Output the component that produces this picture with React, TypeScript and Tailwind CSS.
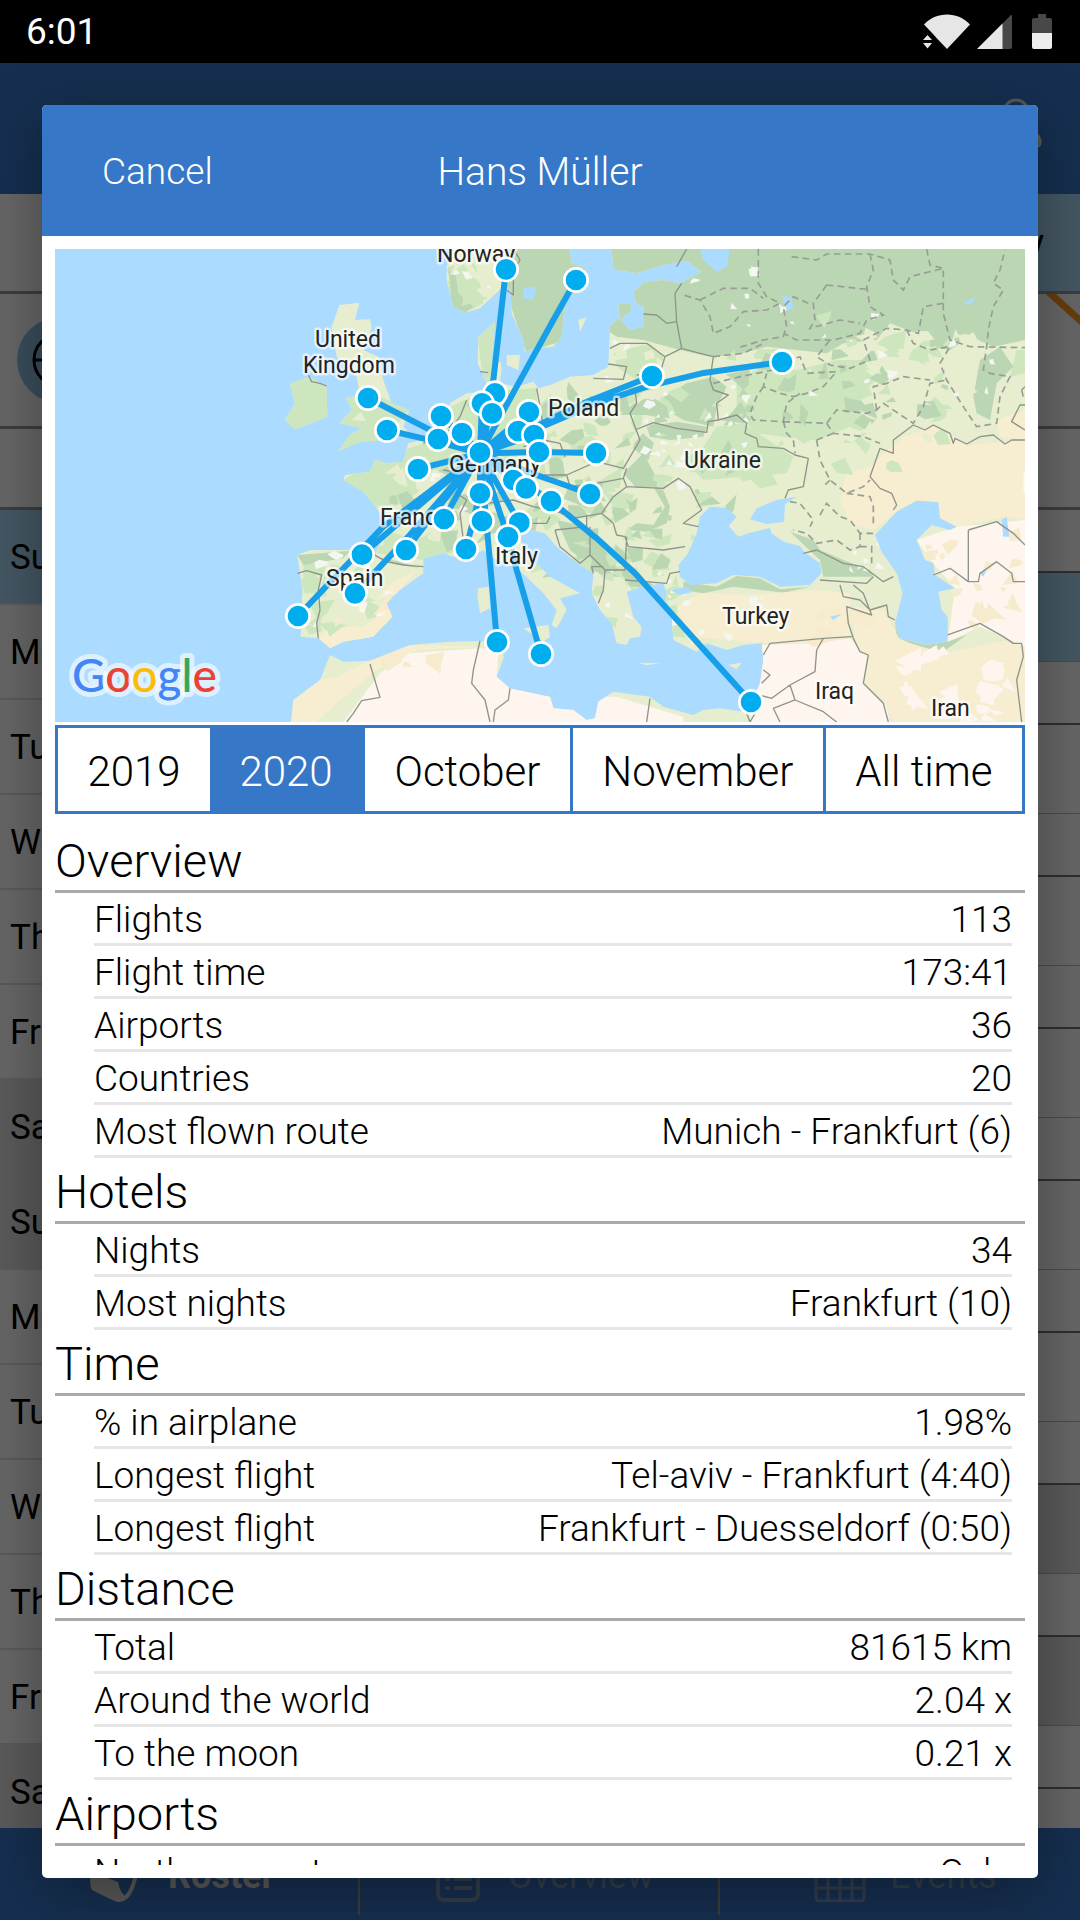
import React from "react";

type Stat = [string, string];

const sections: { title: string; rows: Stat[] }[] = [
  {
    title: "Overview",
    rows: [
      ["Flights", "113"],
      ["Flight time", "173:41"],
      ["Airports", "36"],
      ["Countries", "20"],
      ["Most flown route", "Munich - Frankfurt (6)"],
    ],
  },
  {
    title: "Hotels",
    rows: [
      ["Nights", "34"],
      ["Most nights", "Frankfurt (10)"],
    ],
  },
  {
    title: "Time",
    rows: [
      ["% in airplane", "1.98%"],
      ["Longest flight", "Tel-aviv - Frankfurt (4:40)"],
      ["Longest flight", "Frankfurt - Duesseldorf (0:50)"],
    ],
  },
  {
    title: "Distance",
    rows: [
      ["Total", "81615 km"],
      ["Around the world", "2.04 x"],
      ["To the moon", "0.21 x"],
    ],
  },
  { title: "Airports", rows: [["Northernmost", "Oslo"]] },
];

const periods = ["2019", "2020", "October", "November", "All time"];

const days = ["Su", "Mo", "Tu", "We", "Th", "Fr", "Sa", "Su", "Mo", "Tu", "We", "Th", "Fr", "Sa"];

const HUB = "1290 640";

const routes = [
  `M${HUB}L1330 420L1368 88`,
  `M${HUB}L1400 440L1510 240L1578 120`,
  `M${HUB}L1150 575L954 474`,
  `M${HUB}L1160 605L1011 570`,
  `M${HUB}L1173 528`,
  `M${HUB}L1236 579`,
  `M${HUB}L1335 460`,
  `M${HUB}L1296 490`,
  `M${HUB}L1437 516`,
  `M${HUB}L1404 573`,
  `M${HUB}L1452 585`,
  `M${HUB}L1104 687`,
  `M${HUB}L1467 636L1638 639`,
  `M${HUB}L1390 720L1428 745`,
  `M${HUB}L1460 705L1620 762`,
  `M${HUB}L1503 783L1640 895L1755 1000L2103 1386`,
  `M${HUB}L1290 760L1248 927`,
  `M${HUB}L1182 837`,
  `M${HUB}L1068 930`,
  `M${HUB}L1080 820L936 944`,
  `M${HUB}L1075 890L915 1060`,
  `M${HUB}L1000 860L744 1128`,
  `M${HUB}L1408 848`,
  `M${HUB}L1374 891`,
  `M${HUB}L1314 900L1341 1206`,
  `M${HUB}L1374 891L1400 990L1473 1242`,
  `M${HUB}L1600 490L1806 408`,
  `M${HUB}L1640 490L1790 440L1955 400L2196 366`,
];

const airports = [
  [1368, 88], [1578, 120], [954, 474], [1011, 570], [1173, 528], [1164, 597], [1236, 579],
  [1335, 460], [1296, 490], [1326, 520], [1437, 516], [1404, 573], [1452, 585], [1104, 687],
  [1290, 638], [1467, 636], [1638, 639], [1390, 720], [1428, 745], [1620, 762], [1503, 783],
  [1290, 760], [1296, 843], [1182, 837], [1068, 930], [936, 944], [915, 1060], [744, 1128],
  [1248, 927], [1408, 848], [1374, 891], [1341, 1206], [1473, 1242], [1806, 408], [2196, 366],
  [2103, 1386],
];

const labels: [string, number, number][] = [
  ["Norway", 382, 13],
  ["United", 260, 98],
  ["Kingdom", 248, 124],
  ["Germany", 394, 223],
  ["France", 325, 276],
  ["Spain", 271, 337],
  ["Italy", 440, 315],
  ["Poland", 493, 167],
  ["Ukraine", 629, 219],
  ["Turkey", 667, 375],
  ["Iraq", 760, 450],
  ["Iran", 876, 467],
  ["K", 969, 242],
];

const landPath =
  "M742 945L780 930L900 930L975 945L1000 880L992 820L940 755L880 720L885 705L960 695L975 660L1010 670L1060 665L1075 610L1120 600L1180 560L1200 490L1250 460L1300 455L1310 430L1283 370L1285 290L1335 245L1330 300L1325 360L1355 380L1350 430L1400 440L1450 425L1465 445L1500 435L1560 410L1630 405L1675 380L1680 260L1705 235L1740 270L1780 260L1780 200L1760 190L1750 155L1785 125L1840 120L1890 130L1955 95L1910 62L1840 75L1760 100L1690 88L1685 27H2925V1446H2105L2100 1400L2130 1330L2140 1260L2135 1210L2080 1215L2030 1230L1970 1210L1940 1235L1870 1200L1865 1130L1845 1090L1850 1060L1840 1030L1780 1040L1730 1055L1750 1130L1775 1160L1770 1190L1740 1195L1730 1215L1700 1210L1685 1150L1650 1110L1625 1060L1630 1000L1590 975L1520 920L1485 880L1440 870L1400 880L1440 950L1500 1010L1590 1060L1530 1075L1550 1110L1520 1165L1505 1155L1520 1110L1480 1060L1440 1020L1400 985L1340 960L1300 930L1240 960L1180 940L1120 955L1120 1000L1050 1050L1010 1090L1027 1130L970 1190L880 1205L840 1225L805 1195L752 1190L757 1050Z" +
  "M723 1446L730 1380L810 1320L840 1245L880 1265L960 1262L1080 1215L1200 1205L1290 1203L1345 1210L1362 1250L1340 1310L1380 1345L1500 1370L1510 1405L1570 1410L1610 1440L1635 1435L1645 1385L1690 1355L1800 1370L1840 1400L1930 1425L1960 1410L2010 1405L2080 1415L2105 1400V1446Z" +
  "M868 195L928 188L915 240L960 238L965 265L940 330L985 350L1000 420L1025 490L1078 510L1060 560L1075 575L1000 600L930 605L865 633L900 585L935 565L868 550L905 510L888 475L930 465L920 410L860 350L845 260Z" +
  "M720 430L780 410L830 440L832 530L735 568L705 540L735 490Z" +
  "M1210 27L1190 80L1190 120L1210 200L1245 218L1290 205L1360 140L1382 150L1385 220L1420 300L1425 335L1460 325L1510 320L1535 290L1540 230L1550 175L1600 140L1605 85L1565 70L1558 27Z" +
  "M1370 345L1410 345L1405 390L1370 375ZM1335 360L1355 370L1350 390L1335 385ZM1585 240L1610 232L1590 275ZM1705 190L1745 190L1740 215L1710 240Z" +
  "M1285 1045L1318 1040L1320 1105L1290 1120L1282 1070ZM1420 1165L1495 1155L1500 1190L1480 1205ZM1765 1268L1830 1270L1790 1276ZM2035 1275L2075 1268L2060 1288Z";

const waterPath =
  "M1885 975L1915 940L1940 880L1950 830L1980 800L2030 804L2060 830L2036 858L2065 890L2100 878L2160 864L2165 880L2200 905L2250 918L2265 938L2310 970L2315 1000L2280 1035L2190 1040L2130 1010L2050 1005L2000 1030L1920 1035L1890 1010Z" +
  "M2100 838L2120 805L2180 780L2240 770L2205 792L2202 845L2150 852Z" +
  "M2540 815L2600 782L2665 787L2670 835L2720 860L2700 870L2645 855L2600 900L2625 960L2650 970L2655 1005L2715 1045L2665 1055L2675 1110L2693 1130V1205L2630 1215L2550 1195L2535 1150L2558 1060L2540 1000L2495 935L2475 885Z" +
  "M1950 27L1960 60L2000 95L2030 80L2040 27ZM2195 165L2225 175L2230 205L2210 210ZM1420 145L1460 140L1450 180L1420 175ZM1860 1050L1910 1040L1930 1055L1890 1065ZM2740 190L2775 170L2765 195ZM2855 840L2870 830L2878 890L2860 890ZM2340 1130L2375 1122L2350 1140ZM2790 1000L2810 990L2800 1010Z";

const borders =
  "M742 1000L770 992L815 1005L805 1050L810 1110L800 1150L805 1195M965 940L1010 965L1060 975L1120 980M775 405L785 425L810 430L830 438M1290 1203L1270 1290L1265 1330L1305 1380L1320 1446M1380 1345L1375 1380L1335 1410L1330 1446M960 1272L990 1372L935 1382L910 1420L890 1446" +
  "M1390 27L1410 60L1390 90V165L1370 150M1290 395L1315 398M1250 480L1230 530L1200 570L1120 610M1180 690L1240 700L1220 760L1250 780L1230 820L1240 900M1250 770L1310 790L1390 780L1450 800L1500 810M1440 850L1490 850L1500 830M1460 445L1470 500L1480 560M1420 620L1480 600L1530 610L1545 650" +
  "M1480 705L1550 705L1640 665L1720 685L1770 600L1755 560L1740 520L1760 490L1755 450M1550 705L1560 740L1640 730L1720 715L1730 685M1680 325L1710 310L1790 310L1845 350L1830 400L1760 405M1845 350L1895 325L1950 340L1990 350L1980 420L1990 450L2035 465L2000 490L2005 540L1975 545L1970 577L1880 565L1810 548L1755 570M1630 415L1720 418L1730 380L1675 372M1780 222L1820 225L1850 250L1880 245L1875 160L1895 130M1880 245L1895 325M1880 80L1910 27" +
  "M2005 540L2060 525L2090 550L2085 580L2120 595L2125 620L2200 625L2235 645L2275 655L2260 740L2215 750L2205 775M1720 715L1730 740L1840 745L1885 715L1920 740L1955 810L1900 850L1945 860M1730 740L1690 770L1655 820L1570 835L1510 810M1655 820L1690 850L1700 885L1725 890L1735 920L1840 930L1905 920M1725 1020L1850 1030L1860 1000L1890 995M1515 870L1610 860V830M1515 870L1530 920L1590 970L1620 945L1620 860M1620 945L1665 990L1725 990L1730 890M1665 990L1660 1050L1645 1090M1630 1000L1625 980L1660 980" +
  "M2260 940L2300 930L2380 970L2440 980L2500 1025L2530 1010M2310 1020L2450 1030L2470 1010M2370 1035L2380 1070L2430 1080L2460 1110L2510 1095L2515 1130L2535 1140M2410 1035L2440 1060L2465 1125L2390 1100L2395 1150L2410 1195L2430 1235L2455 1245L2440 1330L2500 1390L2515 1446M2140 1245L2160 1210L2320 1195L2405 1190M2320 1195L2300 1230L2295 1295L2220 1335L2165 1375L2110 1360M2220 1335L2235 1380L2170 1405L2190 1446M2235 1380L2320 1415L2360 1446M2140 1290L2160 1305L2135 1330M1800 1375L1790 1446M2090 1420L2100 1446L2115 1420" +
  "M2460 710L2490 625L2530 640V600L2590 555L2625 570L2650 555L2700 580L2710 610L2715 595L2750 612L2790 590L2830 585L2865 612L2885 600H2925M2460 710L2490 745L2525 760L2540 795L2530 810M2755 870L2840 845L2890 880L2925 915M2755 870V1025H2785L2790 1000L2840 965L2885 1000L2890 1025H2925M2650 1005L2700 985L2755 1025M2693 1185L2790 1150L2860 1190L2890 1210H2915L2920 1250L2900 1320L2915 1446M2925 440L2915 450L2920 470M2925 495H2910L2885 545L2925 570";

const regions =
  "M2125 27V130L2150 170L2190 190L2150 210L2080 215L2040 260L1990 280L1980 230L1950 180L1900 165M1950 180L2020 145L2100 145L2140 175M2225 50L2300 60L2330 42L2460 42L2520 60L2530 120L2560 150L2580 110L2680 85V220L2700 300L2760 320L2925 323M2460 42L2470 90L2450 140L2460 200L2500 225L2450 240L2430 280L2350 300L2240 300L2200 280M2330 135L2450 148M2330 135L2290 190L2295 240L2280 265L2370 240L2430 250M2275 190L2230 170L2200 200L2210 260L2200 290L2140 300L2060 325M2680 190L2620 200L2605 280L2570 270L2510 265L2440 300L2460 360L2400 385L2340 375L2300 350L2340 300M2570 270L2590 310L2640 330L2700 320L2670 370L2690 420L2740 500L2780 560L2840 550L2850 470L2880 410L2820 400L2800 390L2810 320L2815 270L2830 200L2860 150L2830 130L2850 90L2865 30M2630 27L2640 75L2680 85" +
  "M1990 350L2080 340L2140 310M1990 430L2070 410L2170 390L2220 360L2250 350L2270 400L2360 395L2320 440L2270 460L2230 470L2190 460L2140 440L2150 400M2140 440L2120 470L2100 520L2110 540L2200 545L2210 490L2250 460M2200 545L2210 580L2230 600L2235 640M2200 545L2330 550L2360 510L2450 520L2480 510L2500 490L2590 550L2620 500L2640 430L2690 420M2480 510L2470 440L2510 430L2560 410L2640 420M2330 550L2350 580L2440 590L2490 610M2300 600L2350 580M2300 600L2310 660L2340 720L2390 760L2440 740L2460 720M2340 720L2320 740M2220 785L2250 790L2290 840L2280 860M2310 825L2330 790L2370 830L2400 840L2430 880L2470 880M2430 880L2430 920L2400 930L2360 900L2300 910L2270 880L2230 870M2390 760L2460 770L2470 800L2470 850M2430 920L2465 920V970";

const forests =
  "M1685 27H2925V300L2830 320L2760 290L2700 330L2640 320L2600 280L2520 250L2480 300L2380 310L2330 340L2240 330L2150 320L2060 345L1980 350L1890 330L1780 300L1700 290L1640 250L1640 27Z" +
  "M1360 27H1610V150L1550 180L1540 300L1430 340L1370 160ZM1195 80L1215 90L1225 160L1270 200L1245 218L1205 200ZM1780 640L1720 700L1760 745L1810 740L1845 800L1810 855L1760 850L1730 870L1790 875L1850 850L1860 800L1840 750Z" +
  "M1790 560L1880 545L1970 560L1960 590L1860 600L1800 590ZM1840 470L1910 430L1990 410L2030 440L2000 500L1990 560L1900 540L1850 510ZM1520 840L1610 860L1680 950L1720 1010L1660 1010L1560 930ZM2220 875L2290 900L2310 930L2380 960L2460 990L2470 1010L2320 1010L2310 960ZM2770 470L2790 360L2850 320L2890 380L2840 430L2820 540L2780 520ZM742 945L900 932L880 955L760 975ZM975 950L1050 965L1110 985L1020 970ZM1900 1025L2000 1040L2060 1008L2130 1015L2190 1048L2280 1040L2200 1058L2050 1040L1960 1060L1900 1050Z" +
  "M2535 1150L2550 1195L2630 1215L2693 1205L2750 1185L2680 1235L2600 1220L2540 1190Z";

const desert =
  "M2500 640L2560 590L2650 560L2760 615L2925 600V840L2870 830L2720 860L2670 835L2665 787L2600 782L2540 815L2470 870L2400 850L2370 780L2390 700L2460 680Z" +
  "M1880 1100L1950 1060L2100 1065L2300 1050L2400 1060L2400 1190L2300 1210L2150 1210L2040 1200L1920 1190Z" +
  "M2840 540L2925 510V600L2850 590ZM2400 1100L2500 1110L2550 1200L2680 1240L2880 1200L2925 1230V1446H2530L2500 1380L2440 1330ZM800 1190L850 1160L940 1160L1020 1100L1027 1130L970 1190L840 1225ZM1020 1030L1100 990L1040 1060L980 1080ZM723 1446L730 1380L810 1320L860 1310L960 1262L1080 1215L1290 1220L1100 1230L980 1290L870 1380L800 1446Z";

const sand =
  "M2925 840L2720 860L2600 900L2650 970L2715 1045L2693 1205L2790 1160L2880 1200L2925 1220ZM2130 1215L2300 1210L2400 1195L2450 1250L2440 1330L2510 1400L2520 1446H2100ZM880 1446L990 1300L1080 1240L1290 1225L1345 1230L1340 1310L1380 1345L1500 1370L1700 1370L1900 1430V1446ZM920 1080L960 1090L1020 1105L990 1130L930 1115Z";

const lightGreen =
  "M975 660L1120 610L1200 500L1300 455L1460 445L1460 560L1420 640L1300 700L1150 690L1100 760L1000 820L880 720ZM1000 870L1100 900L1200 850L1240 930L1120 960L980 940ZM840 400L1078 510L1000 600L865 633ZM700 400H840V570H700ZM1190 90L1230 60L1290 130L1300 190L1245 218ZM1283 290L1335 245L1330 420L1300 430ZM2000 560L2080 550L2140 590L2230 650L2210 700L2080 710L1960 720L1900 660L1960 620ZM2060 430L2130 380L2240 390L2360 360L2440 360L2480 420L2420 470L2400 560L2300 600L2200 590L2120 580L2060 520ZM760 960L830 970L800 1060L760 1060ZM1480 300L1560 300L1550 330ZM1690 340L1800 310L1840 350L1830 400L1760 420L1700 380ZM2900 330H2925V400L2880 410Z";

type Box = [number, number, number, number, number];

const mottling: { fill: string; size: number; boxes: Box[] }[] = [
  {
    fill: "#cde6bd",
    size: 22,
    boxes: [[1460, 450, 520, 560, 50], [1980, 330, 700, 380, 40], [760, 960, 260, 220, 12], [1180, 40, 120, 160, 6], [1640, 880, 240, 300, 18], [2160, 230, 680, 120, 8]],
  },
  {
    fill: "#bbd6b3",
    size: 22,
    boxes: [[1200, 480, 340, 420, 22], [1560, 440, 540, 400, 34], [2060, 340, 620, 200, 24], [1000, 700, 220, 240, 6], [1500, 870, 360, 200, 14]],
  },
  {
    fill: "#e7eecf",
    size: 18,
    boxes: [[960, 640, 300, 320, 18], [1200, 60, 130, 110, 6], [1700, 330, 180, 150, 8], [2420, 270, 360, 220, 22], [880, 200, 160, 400, 5], [1250, 870, 220, 160, 8], [2450, 560, 200, 60, 4]],
  },
  {
    fill: "#f4f6f1",
    size: 9,
    boxes: [[1150, 680, 120, 240, 9], [1780, 430, 320, 320, 26], [1640, 300, 220, 180, 9], [1900, 80, 320, 180, 8], [2200, 180, 660, 300, 14], [1620, 950, 340, 220, 14], [2400, 880, 120, 170, 8], [760, 940, 300, 230, 10], [1860, 1060, 300, 150, 8], [1220, 50, 110, 120, 4]],
  },
  {
    fill: "#f6eccd",
    size: 18,
    boxes: [[2620, 880, 290, 290, 22], [2300, 1100, 160, 100, 6], [850, 1010, 160, 150, 8], [1000, 1250, 160, 60, 3]],
  },
  { fill: "#fef5ee", size: 20, boxes: [[2560, 1230, 340, 210, 24]] },
];

function patches(boxes: Box[], scale: number, seed: number) {
  let state = seed;
  const next = () => {
    state = (state * 16807) % 2147483647;
    return state / 2147483647;
  };
  let d = "";
  for (const [x, y, w, h, count] of boxes) {
    for (let i = 0; i < count; i++) {
      const cx = x + next() * w;
      const cy = y + next() * h;
      const sides = 3 + Math.floor(next() * 4);
      const size = scale * (0.5 + next());
      for (let k = 0; k < sides; k++) {
        const angle = (k / sides) * Math.PI * 2 + next();
        const r = size * (0.4 + next() * 1.3);
        d += `${k ? "L" : "M"}${Math.round(cx + Math.cos(angle) * r * 1.2)} ${Math.round(cy + Math.sin(angle) * r)}`;
      }
      d += "Z";
    }
  }
  return d;
}

function RouteMap() {
  return (
    <svg viewBox="0 0 970 473" className="block w-full font-[Roboto,sans-serif] font-normal" role="img" aria-label="Flown routes">
      <defs>
        <clipPath id="land">
          <path d={landPath} />
        </clipPath>
      </defs>
      <rect width="970" height="473" fill="#abdbff" />
      <g transform="translate(-5 -9) scale(0.33333)">
        <g clipPath="url(#land)">
          <rect x="0" y="0" width="2940" height="1460" fill="#e6eecf" />
          <path d={lightGreen} fill="#cde6bd" />
          <path d={forests} fill="#bbd6b3" />
          <path d={desert} fill="#f7edd0" />
          <path d={sand} fill="#fef5ee" />
          {mottling.map((m, i) => (
            <path key={i} d={patches(m.boxes, m.size, 77 + i * 911)} fill={m.fill} />
          ))}
        </g>
        <path d={waterPath} fill="#abdbff" />
        <path d={borders} fill="none" stroke="#8f948b" strokeWidth="4" strokeLinejoin="round" />
        <path d={regions} fill="none" stroke="#989d95" strokeWidth="5" strokeDasharray="20 13" />
        <path d={routes.join("")} fill="none" stroke="#189fe9" strokeWidth="18" strokeLinejoin="round" />
      </g>
      <g fontSize="23" fill="#232323" stroke="#ffffff" strokeOpacity="0.65" strokeWidth="5" paintOrder="stroke" strokeLinejoin="round">
        {labels.map(([name, x, y]) => (
          <text key={name} x={x} y={y}>
            {name}
          </text>
        ))}
      </g>
      <g transform="translate(-5 -9) scale(0.33333)" fill="#00adef" stroke="#ffffff" strokeWidth="8">
        {airports.map(([x, y]) => (
          <circle key={`${x}-${y}`} cx={x} cy={y} r="35" />
        ))}
      </g>
      <text x="17" y="443" fontSize="46" fontWeight="500" className="font-[Lato,sans-serif]" stroke="#ffffff" strokeOpacity="0.6" strokeWidth="10" paintOrder="stroke" strokeLinejoin="round">
        <tspan fill="#4285f4">G</tspan>
        <tspan fill="#ea4335">o</tspan>
        <tspan fill="#fbbc05">o</tspan>
        <tspan fill="#4285f4">g</tspan>
        <tspan fill="#34a853">l</tspan>
        <tspan fill="#ea4335">e</tspan>
      </text>
    </svg>
  );
}

function StatusBar() {
  return (
    <div className="flex h-[63px] shrink-0 items-center justify-between bg-black pr-[27px] pl-[26px] text-white">
      <span className="text-[37px] leading-none">6:01</span>
      <svg width="130" height="36" viewBox="0 0 130 36" aria-hidden="true">
        <path d="M1 10.500C7 4 15 .5 24 .5S41 4 47 10.500L24 35L14 24.500L10 20Z" fill="#e6e6e6" />
        <path d="M0 26L4.500 21L9 26ZM0 29H9L4.500 34.500Z" fill="#e6e6e6" />
        <path d="M54 35L88 1Q89 0 89 2V33Q89 35 87 35Z" fill="#484848" />
        <path d="M54 35L79.500 9.500V35Z" fill="#e6e6e6" />
        <path d="M115 0H123V4H127Q129 4 129 6V20H109V6Q109 4 111 4H115Z" fill="#484848" />
        <path d="M109 19H129V33Q129 35 127 35H111Q109 35 109 33Z" fill="#ededed" />
      </svg>
    </div>
  );
}

function RosterPage() {
  return (
    <div className="flex min-h-0 flex-1 flex-col overflow-hidden bg-white" aria-hidden="true">
      <header className="flex h-[131px] shrink-0 items-start justify-end bg-[#3777c7] pt-[34px] pr-[38px]">
        <svg width="52" height="52" viewBox="0 0 52 52" fill="none" stroke="#ddd" strokeWidth="3">
          <circle cx="26" cy="15" r="12" />
          <path d="M3 49Q2 36 16 32L26 37L36 32Q50 36 50 45Q50 49 47 49Z" />
        </svg>
      </header>
      <div className="flex h-[100px] shrink-0 justify-end border-b-[3px] border-[#999]">
        <div className="flex w-1/3 items-center justify-end bg-[#aad9f8] pr-[36px] text-[36px]">Today</div>
      </div>
      <div className="flex h-[135px] shrink-0 items-center justify-between border-b-[3px] border-[#999]">
        <svg width="86" height="86" viewBox="0 0 86 86" className="ml-[17px]">
          <circle cx="43" cy="43" r="43" fill="#8fc4e6" />
          <g fill="none" stroke="#000" strokeWidth="3">
            <circle cx="43" cy="43" r="26" />
            <path d="M17 43H69M43 17V69" />
          </g>
        </svg>
        <svg width="60" height="132" viewBox="0 0 60 132">
          <path d="M22 -8L64 30" stroke="#ff981e" strokeWidth="7" />
        </svg>
      </div>
      <div className="h-[81px] shrink-0 border-b-[3px] border-[#999]" />
      <div className="flex min-h-0 flex-1">
        <ul className="w-1/2">
          {days.map((day, i) => (
            <li
              key={i}
              className={`flex h-[95px] items-center border-b-2 border-[#e0e0e0] pt-[4px] pl-[10px] text-[35px] ${
                i === 0 ? "bg-[#aad9f8]" : i === 6 || i === 7 || i === 13 ? "bg-[#e0e0e0]" : "bg-white"
              }`}
            >
              {day}
            </li>
          ))}
        </ul>
        <ul className="w-1/2">
          {Array.from({ length: 9 }, (_, i) => (
            <li key={i}>
              <div className="h-[63px] border-b-2 border-[#777]" />
              <div
                className={`h-[89px] border-b border-[#bbb] ${
                  i === 0 ? "bg-[#aad9f8]" : i === 6 || i === 7 ? "bg-[#e0e0e0]" : "bg-white"
                }`}
              />
            </li>
          ))}
        </ul>
      </div>
    </div>
  );
}

function BottomNav() {
  return (
    <nav className="grid h-[92px] shrink-0 grid-cols-3 bg-[#3777c7] text-[36px] text-[#7f99b8]" aria-hidden="true">
      <div className="my-[5px] flex items-center gap-[26px] border-r-2 border-[#999] pl-[88px] font-bold text-[#dedede]">
        <svg width="54" height="60" viewBox="0 0 54 60">
          <path d="M3 28L30 38Q32 50 40 54Q32 60 20 54L4 46Q1 40 3 28Z" fill="#dedede" />
          <path d="M50 16Q47 46 37 54Q32 58 25 54" fill="none" stroke="#dedede" strokeWidth="4" />
        </svg>
        <span className="pt-[4px]">Roster</span>
      </div>
      <div className="my-[5px] flex items-center gap-[28px] border-r-2 border-[#999] pl-[76px]">
        <svg width="44" height="56" viewBox="0 0 44 56" fill="none" stroke="currentColor" strokeWidth="4">
          <rect x="2" y="9" width="40" height="45" rx="6" />
          <path d="M9 23H14M18 23H36M9 33H14M18 33H36M9 42H14M18 42H36" />
        </svg>
        <span className="pt-[4px]">Overview</span>
      </div>
      <div className="my-[5px] flex items-center gap-[24px] pl-[94px]">
        <svg width="52" height="56" viewBox="0 0 52 56" fill="none" stroke="currentColor" strokeWidth="3">
          <rect x="2" y="6" width="48" height="49" rx="3" />
          <path d="M2 18H50M2 30H50M2 42H50M14 6V54M26 6V54M38 6V54" />
        </svg>
        <span className="pt-[4px]">Events</span>
      </div>
    </nav>
  );
}

function PeriodTabs() {
  return (
    <div className="mt-[3px] flex h-[89px] border-[3px] border-[#3777c7]" role="group" aria-label="Period">
      {periods.map((period, i) => (
        <button
          key={period}
          type="button"
          aria-pressed={period === "2020"}
          className={`flex-auto pt-[4px] text-[42px] font-light whitespace-nowrap ${
            period === "2020" ? "bg-[#3777c7] text-white" : "bg-white text-black"
          } ${i > 1 ? "border-l-[3px] border-[#3777c7]" : ""}`}
        >
          {period}
        </button>
      ))}
    </div>
  );
}

function StatsSection({ title, rows }: { title: string; rows: Stat[] }) {
  return (
    <section>
      <h2 className="flex h-[66px] items-center border-b-[3px] border-[#a9a9a9] pt-[3px] text-[47px] leading-none">
        {title}
      </h2>
      <div className="pr-[13px] pl-[39px]">
        <table className="w-full border-separate border-spacing-0 text-[37px] leading-none">
          <tbody>
            {rows.map(([name, value], i) => (
              <tr key={i} className="h-[53px]">
                <th scope="row" className="border-b-[3px] border-[#e6e6e6] p-0 pt-[3px] text-left font-light">
                  {name}
                </th>
                <td className="border-b-[3px] border-[#e6e6e6] p-0 pt-[3px] text-right">{value}</td>
              </tr>
            ))}
          </tbody>
        </table>
      </div>
    </section>
  );
}

export default function App() {
  return (
    <div className="relative flex h-screen flex-col overflow-hidden font-[Roboto,sans-serif] text-black">
      <StatusBar />
      <div className="relative flex min-h-0 flex-1 flex-col">
        <RosterPage />
        <BottomNav />
        <div className="absolute inset-0 bg-black/60" />
        <div
          role="dialog"
          aria-modal="true"
          aria-labelledby="dialog-title"
          className="absolute inset-[42px] flex flex-col overflow-hidden rounded-[5px] bg-white font-light shadow-[0_14px_60px_rgba(0,0,0,0.35)]"
        >
          <header className="grid h-[131px] shrink-0 grid-cols-3 items-center bg-[#3777c7] pt-[3px] text-white">
            <button type="button" className="justify-self-start pl-[60px] text-[37px] font-light">
              Cancel
            </button>
            <h1 id="dialog-title" className="text-center text-[39px]">
              Hans Müller
            </h1>
          </header>
          <div className="min-h-0 flex-1 p-[13px]">
            <div className="h-full overflow-hidden">
              <RouteMap />
              <PeriodTabs />
              <div className="pt-[13px]">
                {sections.map((section) => (
                  <StatsSection key={section.title} title={section.title} rows={section.rows} />
                ))}
              </div>
            </div>
          </div>
        </div>
      </div>
    </div>
  );
}
